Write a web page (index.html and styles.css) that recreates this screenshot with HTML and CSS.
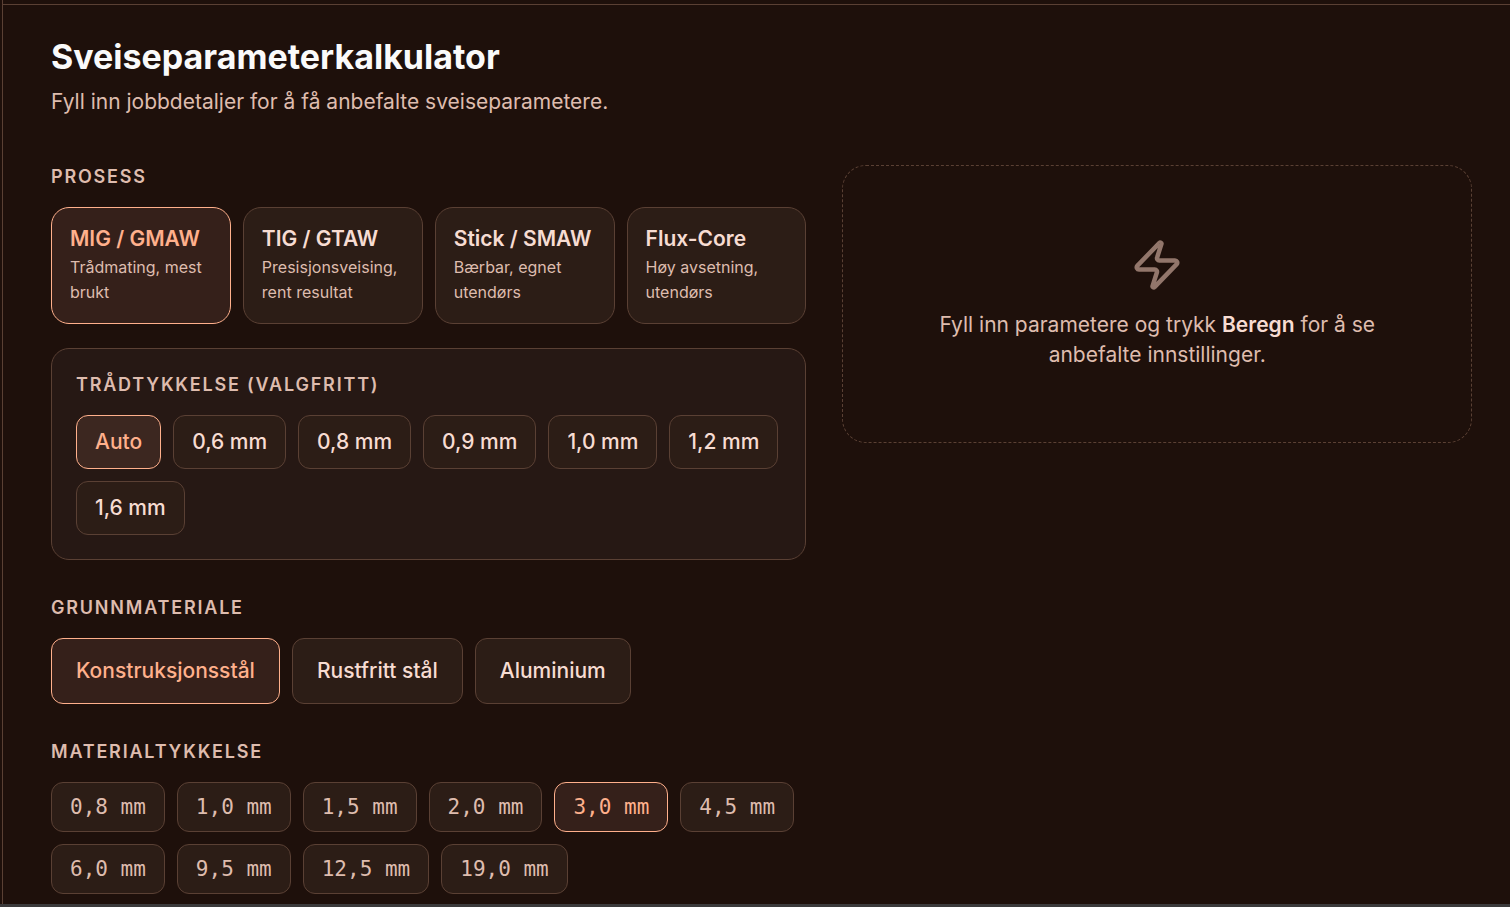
FILE: index.html
```html
<!DOCTYPE html>
<html lang="nb">
<head>
<meta charset="utf-8">
<meta name="viewport" content="width=device-width, initial-scale=1">
<title>Sveiseparameterkalkulator</title>
<link rel="stylesheet" href="styles.css">
</head>
<body>
<main class="page">
  <header class="intro">
    <h1 class="title">Sveiseparameterkalkulator</h1>
    <p class="lead">Fyll inn jobbdetaljer for å få anbefalte sveiseparametere.</p>
  </header>
  <div class="columns">
    <form class="form">
      <section class="group" aria-labelledby="process">
        <h2 class="label" id="process">PROSESS</h2>
        <div class="cards">
          <button type="button" class="option card selected" aria-pressed="true"><span class="name">MIG / GMAW</span><span class="desc">Trådmating, mest brukt</span></button>
          <button type="button" class="option card" aria-pressed="false"><span class="name">TIG / GTAW</span><span class="desc">Presisjonsveising, rent resultat</span></button>
          <button type="button" class="option card" aria-pressed="false"><span class="name">Stick / SMAW</span><span class="desc">Bærbar, egnet utendørs</span></button>
          <button type="button" class="option card" aria-pressed="false"><span class="name">Flux-Core</span><span class="desc">Høy avsetning, utendørs</span></button>
        </div>
      </section>
      <section class="group panel" aria-labelledby="wire">
        <h2 class="label" id="wire">TRÅDTYKKELSE (VALGFRITT)</h2>
        <div class="choices">
          <button type="button" class="option wire selected" aria-pressed="true">Auto</button>
          <button type="button" class="option wire" aria-pressed="false">0,6 mm</button>
          <button type="button" class="option wire" aria-pressed="false">0,8 mm</button>
          <button type="button" class="option wire" aria-pressed="false">0,9 mm</button>
          <button type="button" class="option wire" aria-pressed="false">1,0 mm</button>
          <button type="button" class="option wire" aria-pressed="false">1,2 mm</button>
          <button type="button" class="option wire" aria-pressed="false">1,6 mm</button>
        </div>
      </section>
      <section class="group" aria-labelledby="material">
        <h2 class="label" id="material">GRUNNMATERIALE</h2>
        <div class="choices">
          <button type="button" class="option material selected" aria-pressed="true">Konstruksjonsstål</button>
          <button type="button" class="option material" aria-pressed="false">Rustfritt stål</button>
          <button type="button" class="option material" aria-pressed="false">Aluminium</button>
        </div>
      </section>
      <section class="group" aria-labelledby="thickness">
        <h2 class="label" id="thickness">MATERIALTYKKELSE</h2>
        <div class="choices">
          <button type="button" class="option size" aria-pressed="false">0,8 mm</button>
          <button type="button" class="option size" aria-pressed="false">1,0 mm</button>
          <button type="button" class="option size" aria-pressed="false">1,5 mm</button>
          <button type="button" class="option size" aria-pressed="false">2,0 mm</button>
          <button type="button" class="option size selected" aria-pressed="true">3,0 mm</button>
          <button type="button" class="option size" aria-pressed="false">4,5 mm</button>
          <button type="button" class="option size" aria-pressed="false">6,0 mm</button>
          <button type="button" class="option size" aria-pressed="false">9,5 mm</button>
          <button type="button" class="option size" aria-pressed="false">12,5 mm</button>
          <button type="button" class="option size" aria-pressed="false">19,0 mm</button>
        </div>
      </section>
    </form>
    <aside class="result">
      <svg class="bolt" viewBox="0 0 24 24" aria-hidden="true"><path d="M4 14a1 1 0 0 1-.78-1.63l9.9-10.2a.5.5 0 0 1 .86.46l-1.92 6.02A1 1 0 0 0 13 10h7a1 1 0 0 1 .78 1.63l-9.9 10.2a.5.5 0 0 1-.86-.46l1.92-6.02A1 1 0 0 0 11 14z"/></svg>
      <p class="hint">Fyll inn parametere og trykk <strong>Beregn</strong> for å se anbefalte innstillinger.</p>
    </aside>
  </div>
</main>
</body>
</html>
```
FILE: styles.css
```css
:root {
  --bg: #1e100b;
  --surface: #2c1d16;
  --panel: #261814;
  --line: #5a4034;
  --accent: #ffb08c;
  --selected: #35201a;
  --text: #f7dcd2;
  --muted: #debcae;
}

* { box-sizing: border-box; }

html { height: 100%; }

body {
  margin: 0;
  min-height: 100%;
  padding: 4px 0 0 2px;
  background: linear-gradient(90deg, transparent 2px, var(--line) 2px, var(--line) 3px, transparent 3px) var(--bg);
  border-bottom: 3px solid #3b3a3b;
  color: var(--text);
  font-family: Inter, "Liberation Sans", sans-serif;
  font-size: 21px;
  display: flex;
}

h1, h2, p { margin: 0; }

.page {
  flex: 1;
  min-width: 0;
  border-top: 1px solid var(--line);
  border-left: 1px solid var(--line);
  padding: 30px 38px 10px 48px;
}

.intro { margin-bottom: 48px; }

.title {
  color: #fafafa;
  font-size: 34px;
  line-height: 44px;
  font-weight: 700;
}

.lead {
  margin-top: 8px;
  color: var(--muted);
  line-height: 30px;
}

.columns {
  display: grid;
  grid-template-columns: 6fr 5fr;
  gap: 36px;
  align-items: start;
}

.form {
  display: flex;
  flex-direction: column;
  gap: 36px;
}

.group {
  display: flex;
  flex-direction: column;
  gap: 18px;
}

.label {
  color: var(--muted);
  font-size: 18px;
  line-height: 24px;
  font-weight: 600;
  letter-spacing: 0.1em;
}

.cards {
  display: grid;
  grid-template-columns: repeat(4, 1fr);
  gap: 12px;
}

.choices {
  display: flex;
  flex-wrap: wrap;
  gap: 12px;
}

.panel {
  margin-top: -12px;
  padding: 24px;
  background: var(--panel);
  border: 1px solid var(--line);
  border-radius: 18px;
}

.option {
  background: var(--surface);
  border: 1px solid var(--line);
  border-radius: 12px;
  color: var(--text);
  font: inherit;
  font-weight: 500;
  line-height: 30px;
  cursor: pointer;
}

.selected {
  background: var(--selected);
  border-color: var(--accent);
  color: var(--accent);
}

.card {
  display: flex;
  flex-direction: column;
  gap: 4px;
  padding: 18px;
  border-radius: 18px;
  text-align: left;
}

.name {
  line-height: 25px;
  font-weight: 600;
}

.desc {
  color: var(--muted);
  font-size: 16px;
  line-height: 25px;
  font-weight: 400;
}

.wire { padding: 11px 18px; }

.wire.selected { background: #3c2720; }

.material { padding: 17px 24px; }

.size {
  padding: 9px 18px;
  font-family: "DejaVu Sans Mono", "Liberation Mono", monospace;
}

.size:not(.selected) { color: var(--muted); }

.result {
  display: flex;
  flex-direction: column;
  align-items: center;
  gap: 18px;
  padding: 72px;
  border: 1px dashed var(--line);
  border-radius: 24px;
  color: var(--muted);
  text-align: center;
}

.bolt {
  width: 54px;
  height: 54px;
  fill: none;
  stroke: #92766b;
  stroke-width: 2;
  stroke-linecap: round;
  stroke-linejoin: round;
}

.hint { line-height: 30px; }

.hint strong {
  color: var(--text);
  font-weight: 600;
}
```
